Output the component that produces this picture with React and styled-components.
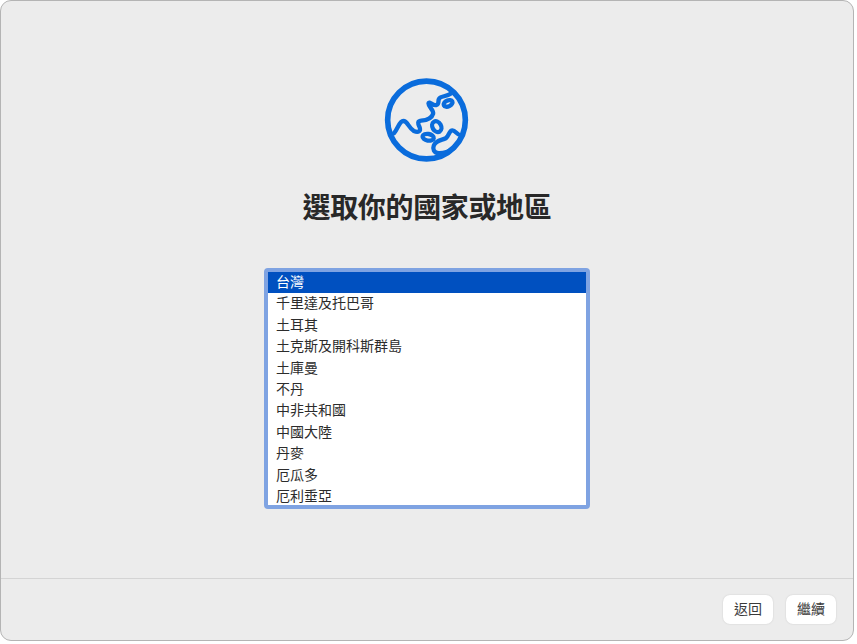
import styled, { createGlobalStyle } from 'styled-components';

const GlobalStyle = createGlobalStyle`
  html, body {
    margin: 0;
    padding: 0;
    background: #fff;
  }
  body {
    font-family: "Noto Sans CJK TC", "Liberation Sans", sans-serif;
  }
`;

const countries = [
  '台灣',
  '千里達及托巴哥',
  '土耳其',
  '土克斯及開科斯群島',
  '土庫曼',
  '不丹',
  '中非共和國',
  '中國大陸',
  '丹麥',
  '厄瓜多',
  '厄利垂亞',
];

function Globe() {
  return (
    <GlobeIcon viewBox="30 30 280 270">
      <g fill="none" stroke="#0a6cdc" strokeWidth="13" strokeLinecap="round" strokeLinejoin="round">
        <circle cx="170" cy="165" r="117" strokeWidth="17" />
        <path d="M72 205 C84 192 88 168 100 168 C114 168 116 190 132 198 C146 204 154 198 149 186 C144 176 142 168 154 167 C170 166 186 160 190 146 C192 134 176 126 176 115 C178 106 190 124 200 120 C212 116 200 102 212 97 C220 93 232 93 244 85" />
        <ellipse cx="235" cy="115" rx="14" ry="9" transform="rotate(-25 235 115)" />
        <ellipse cx="201" cy="185" rx="13" ry="17" transform="rotate(-30 201 185)" />
        <ellipse cx="175" cy="217" rx="17" ry="10" transform="rotate(10 175 217)" />
        <path d="M274 210 C264 214 258 196 248 196 C238 196 240 210 228 220 C216 226 198 226 192 242 C188 252 192 263 206 265 C222 266 240 258 252 250" />
      </g>
    </GlobeIcon>
  );
}

export default function App() {
  return (
    <>
      <GlobalStyle />
      <Janela>
        <Corpo>
          <Globe />
          <Titulo>選取你的國家或地區</Titulo>
          <Lista>
            {countries.map((nome, i) => (
              <Linha key={nome} $selecionada={i === 0}>{nome}</Linha>
            ))}
          </Lista>
        </Corpo>
        <Rodape>
          <Botao>返回</Botao>
          <Botao>繼續</Botao>
        </Rodape>
      </Janela>
    </>
  );
}

const Janela = styled.div`
  width: 854px;
  height: 641px;
  box-sizing: border-box;
  display: flex;
  flex-direction: column;
  background: #ececec;
  border: 1px solid #b4b4b4;
  border-radius: 11px;
  overflow: hidden;
`;

const Corpo = styled.div`
  flex: 1;
  display: flex;
  flex-direction: column;
  align-items: center;
  padding-top: 74px;
  box-sizing: border-box;
`;

const GlobeIcon = styled.svg`
  width: 93px;
  height: 90px;
  display: block;
  margin-left: -1px;
`;

const Titulo = styled.h1`
  margin: 21px 0 0;
  font-size: 28px;
  line-height: 40px;
  font-weight: 700;
  color: #282828;
  letter-spacing: -0.35px;
`;

const Lista = styled.div`
  width: 326px;
  height: 241px;
  margin-top: 42px;
  box-sizing: border-box;
  border: 4px solid #7fa3e2;
  border-radius: 4px;
  background: #fff;
  overflow: hidden;
`;

const Linha = styled.div`
  height: 21.4px;
  line-height: 19px;
  padding-left: 8px;
  font-size: 14px;
  color: ${(p) => (p.$selecionada ? '#fff' : '#2c2c2c')};
  background: ${(p) => (p.$selecionada ? '#0050c0' : 'transparent')};
`;

const Rodape = styled.div`
  height: 62px;
  box-sizing: border-box;
  border-top: 1px solid #d4d4d4;
  display: flex;
  justify-content: flex-end;
  align-items: flex-start;
  gap: 13px;
  padding: 16px 17px 0 0;
`;

const Botao = styled.button`
  width: 50px;
  height: 29px;
  padding: 0 0 3px;
  border: none;
  border-radius: 7px;
  background: #fff;
  box-shadow: 0 0 2px rgba(0, 0, 0, 0.14);
  font-family: inherit;
  font-size: 14px;
  color: #3a3a3a;
`;
